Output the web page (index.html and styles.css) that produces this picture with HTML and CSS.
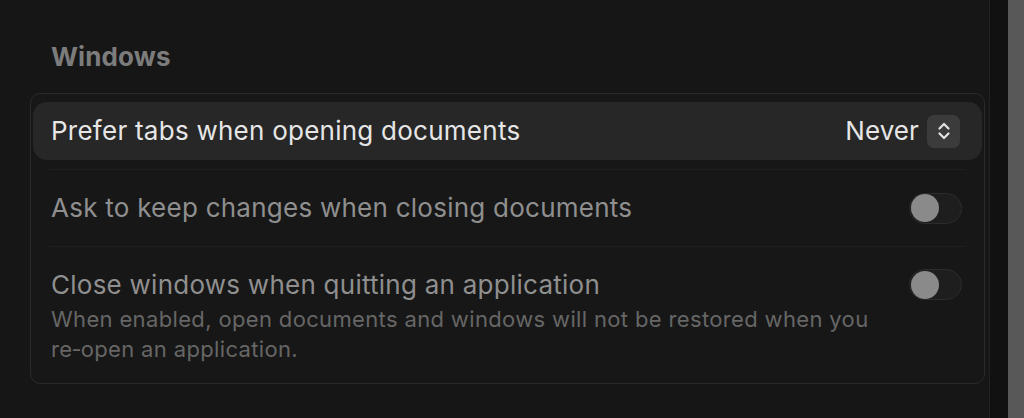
FILE: index.html
```html
<!DOCTYPE html>
<html lang="en">
<head>
<meta charset="utf-8">
<title>Windows settings</title>
<link rel="stylesheet" href="styles.css">
</head>
<body>
<div class="window">
  <main class="content">
    <h2 class="section-title">Windows</h2>
    <section class="panel">
      <div class="row row-active">
        <span class="row-label">Prefer tabs when opening documents</span>
        <div class="select">
          <span class="select-value">Never</span>
          <span class="stepper">
            <svg width="14" height="20" viewBox="0 0 14 20" aria-hidden="true">
              <path d="M2.5 7.5 L7 3 L11.5 7.5" fill="none" stroke="#e2e2e2" stroke-width="2.2" stroke-linecap="round" stroke-linejoin="round"/>
              <path d="M2.5 12.5 L7 17 L11.5 12.5" fill="none" stroke="#e2e2e2" stroke-width="2.2" stroke-linecap="round" stroke-linejoin="round"/>
            </svg>
          </span>
        </div>
      </div>
      <div class="sep sep-first"></div>
      <div class="row row-plain">
        <span class="row-label dim">Ask to keep changes when closing documents</span>
        <span class="toggle"><span class="knob"></span></span>
      </div>
      <div class="sep"></div>
      <div class="row row-desc">
        <div class="text-col">
          <span class="row-label dim">Close windows when quitting an application</span>
          <p class="desc">When enabled, open documents and windows will not be restored when you re&#8209;open an application.</p>
        </div>
        <span class="toggle"><span class="knob"></span></span>
      </div>
    </section>
  </main>
  <div class="edge-line"></div>
  <div class="edge-gap"></div>
  <div class="scroll-strip"></div>
</div>
</body>
</html>
```

FILE: styles.css
```css
* { box-sizing: border-box; }
html, body {
  margin: 0;
  padding: 0;
  overflow: hidden;
  background: #161616;
  font-family: Inter, "Noto Sans", "Liberation Sans", sans-serif;
  -webkit-font-smoothing: antialiased;
}
.window {
  display: grid;
  grid-template-columns: 1fr 1px 18px 16px;
  height: 418px;
  width: 1024px;
  overflow: hidden;
}
.content {
  min-width: 0;
  padding: 0 4px 0 30px;
}
.edge-line {
  background: #222222;
}
.edge-gap {
  background: #111111;
}
.scroll-strip {
  background: #585858;
}
.section-title {
  margin: 0;
  padding: 41px 0 0 21px;
  height: 93px;
  font-size: 26px;
  font-weight: 700;
  color: #7c7c7c;
  line-height: 32px;
  letter-spacing: 0.1px;
}
.panel {
  width: 955px;
  height: 291px;
  border: 1px solid #2a2a2a;
  border-radius: 10px;
  background: #171717;
  padding: 8px 2px 0 2px;
}
.row {
  display: flex;
  align-items: center;
  justify-content: space-between;
  padding: 0 20px 0 18px;
}
.row-active {
  height: 58px;
  background: #272727;
  border-radius: 14px;
}
.row-plain {
  height: 76px;
}
.row-desc {
  align-items: flex-start;
  padding-top: 22px;
}
.sep {
  height: 1px;
  background: #1f1f1f;
  margin: 0 16px;
}
.sep-first { margin-top: 9px; }
.row-label {
  font-size: 26px;
  color: #e6e6e6;
  line-height: 32px;
  letter-spacing: 0.25px;
}
.row-label.dim { color: #8f8f8f; }
.select {
  display: flex;
  align-items: center;
  gap: 8px;
  margin-right: 2px;
}
.select-value {
  font-size: 26px;
  color: #e6e6e6;
  line-height: 32px;
  letter-spacing: 0.1px;
}
.stepper {
  width: 33px;
  height: 33px;
  border-radius: 7px;
  background: #3b3b3b;
  display: flex;
  align-items: center;
  justify-content: center;
}
.toggle {
  flex: none;
  width: 53px;
  height: 31px;
  border-radius: 16px;
  background: #1e1e1e;
  border: 1px solid #2c2c2c;
  padding: 1px;
  display: flex;
  align-items: center;
}
.knob {
  width: 28px;
  height: 28px;
  border-radius: 50%;
  background: #8a8a8a;
}
.text-col {
  display: flex;
  flex-direction: column;
}
.desc {
  margin: 3px 0 0;
  width: 845px;
  font-size: 22px;
  line-height: 30px;
  color: #666666;
  letter-spacing: 0.35px;
}
```
